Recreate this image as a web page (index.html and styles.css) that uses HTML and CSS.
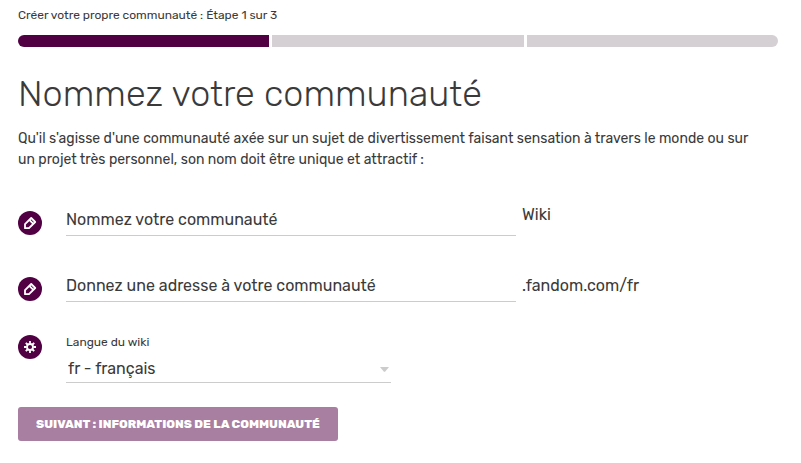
FILE: index.html
```html
<!DOCTYPE html>
<html lang="fr">
<head>
<meta charset="utf-8">
<meta name="viewport" content="width=device-width, initial-scale=1">
<title>Créer votre propre communauté</title>
<link rel="stylesheet" href="styles.css">
</head>
<body>
<main class="wizard">
  <p class="step">Créer votre propre communauté : Étape 1 sur 3</p>
  <div class="progress">
    <span class="segment segment-done"></span>
    <span class="segment"></span>
    <span class="segment"></span>
  </div>
  <h1 class="title">Nommez votre communauté</h1>
  <p class="intro">Qu'il s'agisse d'une communauté axée sur un sujet de divertissement faisant sensation à travers le monde ou sur un projet très personnel, son nom doit être unique et attractif :</p>
  <form class="form">
    <div class="row">
      <span class="badge">
        <svg viewBox="0 0 24 24" aria-hidden="true"><path d="M7 17.2V13.2L13.2 7L17.2 11L11 17.2Z M11.3 8.9L15.3 12.9"/></svg>
      </span>
      <input class="field" id="name" type="text" placeholder="Nommez votre communauté" aria-label="Nommez votre communauté">
      <label class="suffix suffix-raised" for="name">Wiki</label>
    </div>
    <div class="row">
      <span class="badge">
        <svg viewBox="0 0 24 24" aria-hidden="true"><path d="M7 17.2V13.2L13.2 7L17.2 11L11 17.2Z M11.3 8.9L15.3 12.9"/></svg>
      </span>
      <input class="field" id="address" type="text" placeholder="Donnez une adresse à votre communauté" aria-label="Donnez une adresse à votre communauté">
      <label class="suffix" for="address">.fandom.com/fr</label>
    </div>
    <div class="row row-language">
      <span class="badge">
        <svg viewBox="0 0 24 24" aria-hidden="true"><circle cx="12" cy="12" r="3"/><path d="M12 6V8.5M12 15.5V18M6 12H8.5M15.5 12H18M7.8 7.8L9.5 9.5M14.5 14.5L16.2 16.2M16.2 7.8L14.5 9.5M9.5 14.5L7.8 16.2"/></svg>
      </span>
      <div class="language">
        <label class="language-label" for="language">Langue du wiki</label>
        <div class="select-box">
          <select class="select" id="language"><option>fr - français</option></select>
          <svg class="caret" viewBox="0 0 9 5" aria-hidden="true"><path d="M0 0H9L5.5 4.2Q4.5 5.2 3.5 4.2Z"/></svg>
        </div>
      </div>
    </div>
    <button class="next" type="button">Suivant : Informations de la communauté</button>
  </form>
</main>
</body>
</html>
```
FILE: styles.css
```css
* { box-sizing: border-box; }
body {
  margin: 0;
  background: #fff;
  color: #3a3a3a;
  font: 16px/24px Rubik, Roboto, sans-serif;
}
.wizard { padding: 6px 23px 22px 18px; }
.step { margin: 0 0 11px; font-size: 12px; line-height: 18px; }
.progress {
  display: flex;
  gap: 3px;
  height: 12px;
  border-radius: 6px;
  overflow: hidden;
}
.segment { flex: 1; background: #d5d0d4; }
.segment-done { background: #520044; }
.title { margin: 24px 0 11px; font-size: 36px; line-height: 46px; font-weight: 300; }
.intro { margin: 0; padding-right: 24px; font-size: 14px; line-height: 21px; }
.form { padding-top: 33px; }
.row { display: flex; align-items: flex-start; }
.row + .row { margin-top: 33px; }
.row + .row-language { margin-top: 25px; }
.badge {
  flex: none;
  width: 24px;
  height: 24px;
  margin: 8px 24px 0 0;
  border-radius: 50%;
  background: #520044;
}
.badge svg {
  display: block;
  fill: none;
  stroke: #fff;
  stroke-width: 1.8;
  stroke-linejoin: round;
}
.field {
  flex: 0 1 450px;
  min-width: 0;
  height: 29px;
  margin-top: 4px;
  padding: 0 0 3px;
  border: 0;
  border-bottom: 1px solid #ccc;
  background: none;
  color: inherit;
  font: inherit;
}
.field::placeholder { color: inherit; opacity: 1; }
.suffix { margin: 5px 0 0 6px; }
.suffix-raised { margin-top: 0; }
.language { flex: 0 1 325px; min-width: 0; padding-top: 6px; }
.language-label { display: block; font-size: 12px; line-height: 18px; }
.select-box {
  display: flex;
  align-items: center;
  padding: 6px 0 1px;
  border-bottom: 1px solid #ccc;
}
.select {
  appearance: none;
  flex: 1;
  height: 24px;
  margin-right: -9px;
  padding: 0 9px 0 2px;
  border: 0;
  background: none;
  color: inherit;
  font: inherit;
}
.caret { width: 9px; margin-right: 2px; fill: #ccc; pointer-events: none; }
.next {
  display: block;
  height: 34px;
  margin-top: 24px;
  padding: 0 18px;
  border: 0;
  border-radius: 3px;
  background: #a87ea1;
  color: #fff;
  font: 800 12px/18px Rubik, Roboto, sans-serif;
  text-transform: uppercase;
}
```
